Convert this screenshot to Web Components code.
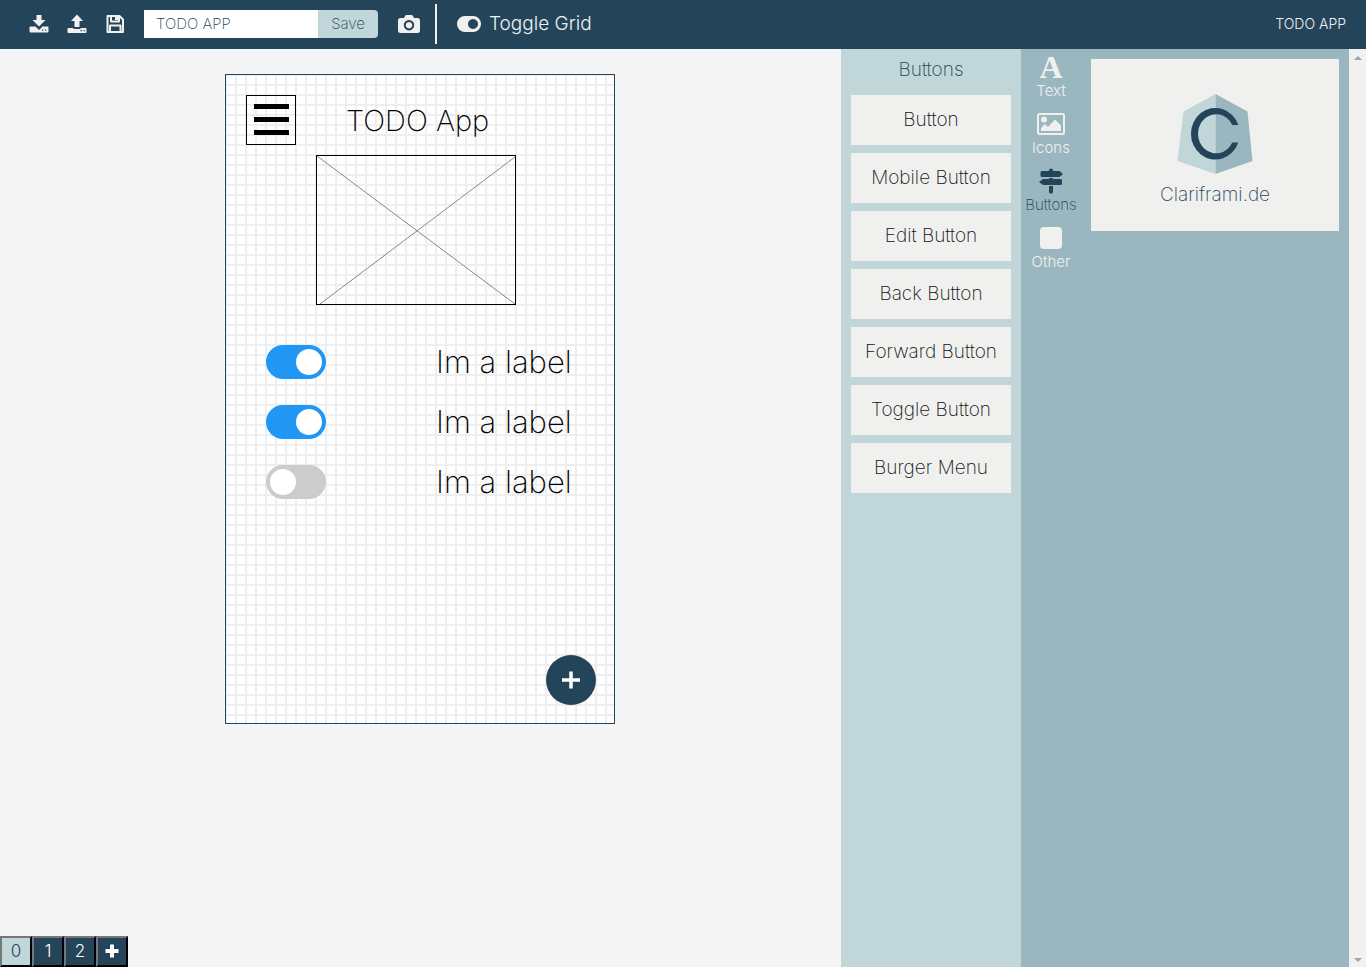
<!DOCTYPE html>
<html lang="en">
<head>
<meta charset="utf-8">
<title>Clariframi.de</title>
<style>
  html, body { height: 100%; margin: 0; }
  body {
    --navy: #24445a;
    --mist: #c1d6d9;
    --steel: #9ab7bf;
    --paper: #f0f1ef;
    font-family: Inter, "Open Sans", sans-serif;
    font-weight: 200;
    background: #f5f5f5;
  }
</style>
</head>
<body>
<wire-app>
  <wire-toolbar slot="top" project="TODO APP"></wire-toolbar>
  <wire-stage slot="stage">
    <wire-node style="left:20px;top:20px"><wire-burger></wire-burger></wire-node>
    <wire-node style="left:120px;top:26px"><wire-heading>TODO App</wire-heading></wire-node>
    <wire-node style="left:90px;top:80px"><wire-image></wire-image></wire-node>
    <wire-node style="left:40px;top:270px"><wire-switch checked>Im a label</wire-switch></wire-node>
    <wire-node style="left:40px;top:330px"><wire-switch checked>Im a label</wire-switch></wire-node>
    <wire-node style="left:40px;top:390px"><wire-switch>Im a label</wire-switch></wire-node>
    <wire-node style="left:320px;top:580px"><wire-fab></wire-fab></wire-node>
  </wire-stage>
  <wire-pages slot="pages"></wire-pages>
  <wire-palette slot="palette" heading="Buttons">
    <wire-item>Button</wire-item>
    <wire-item>Mobile Button</wire-item>
    <wire-item>Edit Button</wire-item>
    <wire-item>Back Button</wire-item>
    <wire-item>Forward Button</wire-item>
    <wire-item>Toggle Button</wire-item>
    <wire-item>Burger Menu</wire-item>
  </wire-palette>
  <wire-categories slot="categories">
    <wire-category><b slot="icon">A</b>Text</wire-category>
    <wire-category><wire-icon slot="icon" name="image"></wire-icon>Icons</wire-category>
    <wire-category active><wire-icon slot="icon" name="signs"></wire-icon>Buttons</wire-category>
    <wire-category><wire-icon slot="icon" name="square"></wire-icon>Other</wire-category>
  </wire-categories>
  <wire-card slot="details">Clariframi.de</wire-card>
  <wire-scrollbar slot="scroll"></wire-scrollbar>
</wire-app>

<script>
const define = (name, html, setup) => {
  const template = document.createElement('template');
  template.innerHTML = html;
  customElements.define(name, class extends HTMLElement {
    constructor() {
      super();
      this.attachShadow({ mode: 'open' }).append(template.content.cloneNode(true));
    }
    connectedCallback() { if (setup) setup(this, this.shadowRoot); }
  });
};

const icons = {
  download: [20, 20, '<path fill-rule="evenodd" d="M7.500 1h5v5h4L10 12.500 3.500 6h4zM1.500 12.500h5L10 16l3.500-3.500h5q1 0 1 1v4q0 1-1 1h-17q-1 0-1-1v-4q0-1 1-1zM13 15.500v1.300h1.300v-1.300zM16 15.500v1.300h1.300v-1.300z"/>'],
  upload: [20, 20, '<path fill-rule="evenodd" d="M10 .5 16 7h-3.500v6h-5V7H4zM1.500 14H6q.5 1 1.500 1h5q1 0 1.500-1h4.500q1 0 1 1v3q0 1-1 1h-17q-1 0-1-1v-3q0-1 1-1zM13.500 16v1.300h1.300V16zM16.500 16v1.300h1.300V16z"/>'],
  save: [20, 20, '<path d="M2.500 2h12L18 5.500V18H2.500zM5 18v-6.500h10.500V18M6 2v5.500h8V2" fill="none" stroke="currentColor" stroke-width="2" stroke-linejoin="round"/><path d="M10 2h3v4h-3z"/>'],
  camera: [22, 20, '<path fill-rule="evenodd" d="M2.500 4H6l1.200-2.300Q7.600 1 8.400 1h5.200q.8 0 1.200.7L16 4h3.500Q22 4 22 6.500v10q0 2.500-2.500 2.500h-17Q0 19 0 16.500v-10Q0 4 2.500 4zM11 6a5.200 5.200 0 1 0 .001 0zM11 8a3.200 3.200 0 1 1-.001 0z"/>'],
  toggle: [24, 16, '<path fill-rule="evenodd" d="M8 0h8a8 8 0 0 1 0 16H8A8 8 0 0 1 8 0zM16 3a5 5 0 1 0 .001 0z"/>'],
  image: [28, 24, '<path fill-rule="evenodd" d="M2.500 1h23Q28 1 28 3.500v17q0 2.500-2.500 2.500h-23Q0 23 0 20.500v-17Q0 1 2.500 1zM2 3v18h24V3z"/><circle cx="7" cy="7.500" r="3"/><path d="M4 19v-3l4-4 3 3 7-7.500 6 6V19z"/>'],
  signs: [24, 26, '<path d="M10 2q0-1.500 2-1.500T14 2v1h6.500L24 6l-3.500 3H3Q1.500 9 1.500 7.500v-3Q1.500 3 3 3h7zM10 10h4v1h7.500q1.500 0 1.500 1.500v3q0 1.500-1.500 1.500H4L0 14l4-3h6zM10 18h4v6q0 1.500-2 1.500T10 24z"/>'],
  square: [22, 22, '<rect width="22" height="22" rx="4"/>'],
  plus: [14, 14, '<path d="M5 .5h4V5h4.500v4H9v4.500H5V9H.5V5H5z"/>']
};

define('wire-icon', `<style>
  :host { display: inline-flex; flex: none; }
  svg { display: block; fill: currentColor; }
</style><svg aria-hidden="true"></svg>`, (host, root) => {
  const [w, h, body] = icons[host.getAttribute('name')];
  const svg = root.querySelector('svg');
  svg.setAttribute('width', w);
  svg.setAttribute('height', h);
  svg.setAttribute('viewBox', '0 0 ' + w + ' ' + h);
  svg.innerHTML = body;
});

define('wire-app', `<style>
  :host {
    display: grid; min-height: 100vh;
    grid-template-columns: minmax(0, 1fr) 180px 60px 268px 17px;
    grid-template-rows: auto minmax(0, 1fr);
  }
  header { grid-column: 1 / -1; }
  main { display: flex; flex-direction: column; justify-content: space-between; }
  .palette { background: var(--mist); }
  .tools, .details { background: var(--steel); }
  .scroll { display: grid; background: #f1f1f1; }
</style>
<header><slot name="top"></slot></header>
<main><slot name="stage"></slot><slot name="pages"></slot></main>
<aside class="palette"><slot name="palette"></slot></aside>
<nav class="tools"><slot name="categories"></slot></nav>
<section class="details"><slot name="details"></slot></section>
<div class="scroll"><slot name="scroll"></slot></div>`);

define('wire-toolbar', `<style>
  :host {
    display: flex; align-items: center; box-sizing: border-box; height: 49px;
    padding: 0 20px 2px 29px; background: var(--navy); color: var(--paper);
  }
  button { display: flex; align-items: center; padding: 0; border: 0; background: none; color: inherit; font: inherit; }
  .files { display: flex; gap: 18px; margin-right: 19px; }
  form { display: flex; height: 28px; margin: 0 20px 0 0; font-size: 15px; }
  input {
    box-sizing: border-box; width: 174px; padding: 0 12px; border: 0; border-radius: 0;
    background: #fff; color: var(--navy); font: inherit;
  }
  form button { width: 60px; justify-content: center; border-radius: 0 4px 4px 0; background: var(--mist); color: var(--navy); }
  .rule { width: 2px; height: 40px; margin: 0 20px 0 15px; background: var(--paper); }
  .grid { gap: 8px; font-size: 19px; font-weight: 300; }
  .name { margin-left: auto; font-size: 14px; font-weight: 300; }
</style>
<div class="files">
  <button aria-label="Download"><wire-icon name="download"></wire-icon></button>
  <button aria-label="Upload"><wire-icon name="upload"></wire-icon></button>
  <button aria-label="Save file"><wire-icon name="save"></wire-icon></button>
</div>
<form onsubmit="return false">
  <input aria-label="Project name">
  <button>Save</button>
</form>
<button aria-label="Screenshot"><wire-icon name="camera"></wire-icon></button>
<div class="rule"></div>
<button class="grid"><wire-icon name="toggle"></wire-icon>Toggle Grid</button>
<span class="name"></span>`, (host, root) => {
  root.querySelector('input').value = host.getAttribute('project');
  root.querySelector('.name').textContent = host.getAttribute('project');
});

define('wire-stage', `<style>
  :host {
    display: block; position: relative; box-sizing: border-box; align-self: center;
    width: 390px; height: 650px; margin: 25px 1px 25px 0;
    border: 1px solid var(--navy); background-color: #fff;
    background-image: linear-gradient(#eee 2px, transparent 2px), linear-gradient(90deg, #eee 2px, transparent 2px);
    background-size: 10px 10px; background-position: 9px 9px;
    color: #000;
  }
</style><slot></slot>`);

define('wire-node', `<style>:host { display: block; position: absolute; }</style><slot></slot>`);

define('wire-burger', `<style>
  :host { display: block; }
  button {
    display: flex; flex-direction: column; gap: 8px; box-sizing: border-box; width: 50px; height: 50px;
    padding: 8px 7px; border: 1px solid #000; background: none;
  }
  i { width: 35px; height: 5px; background: #000; }
</style><button aria-label="Menu"><i></i><i></i><i></i></button>`);

define('wire-heading', `<style>
  :host { display: block; font-size: 29px; line-height: 40px; white-space: nowrap; }
</style><slot></slot>`);

define('wire-image', `<style>
  :host { display: block; box-sizing: border-box; width: 200px; height: 150px; border: 1px solid #000; }
  svg { display: block; stroke: #888; }
</style><svg width="198" height="148" aria-hidden="true"><path d="M0 0 198 148M198 1 3 148"/></svg>`);

define('wire-switch', `<style>
  :host { display: block; }
  label { display: flex; align-items: center; gap: 110px; font-size: 31px; line-height: 34px; white-space: nowrap; }
  input {
    appearance: none; flex: none; box-sizing: border-box; width: 60px; height: 34px; margin: 0; padding: 4px;
    border-radius: 17px; background: #ccc;
  }
  input::before { content: ""; display: block; width: 26px; height: 26px; border-radius: 50%; background: #fff; }
  input:checked { background: #2196f3; }
  input:checked::before { margin-left: 26px; }
</style><label><input type="checkbox"><span><slot></slot></span></label>`, (host, root) => {
  root.querySelector('input').checked = host.hasAttribute('checked');
});

define('wire-fab', `<style>
  :host { display: block; }
  button {
    display: grid; place-items: center; width: 50px; height: 50px; padding: 0;
    border: 0; border-radius: 50%; background: var(--navy);
  }
</style><button aria-label="Add"><svg width="18" height="18" aria-hidden="true"><path d="M9 .5v17M0 9h18" stroke="#fff" stroke-width="3.500"/></svg></button>`);

define('wire-pages', `<style>
  :host { display: flex; }
  button {
    display: grid; place-items: center; box-sizing: border-box; width: 32px; height: 31px; padding: 0 0 1px;
    border: 2px outset #767676; border-color: #767676 #212121 #212121 #767676;
    background: var(--navy); color: #fff; font: inherit; font-size: 17px; font-weight: 300;
  }
  .current { background: var(--mist); color: var(--navy); }
</style>
<button class="current">0</button><button>1</button><button>2</button><button aria-label="Add page"><wire-icon name="plus"></wire-icon></button>`);

define('wire-palette', `<style>
  :host { display: flex; flex-direction: column; gap: 8px; padding: 8px 10px; }
  h2 { margin: 0; font-size: 19px; font-weight: 200; line-height: 26px; padding-bottom: 4px; text-align: center; color: var(--navy); }
</style><h2></h2><slot></slot>`, (host, root) => {
  root.querySelector('h2').textContent = host.getAttribute('heading');
});

define('wire-item', `<style>
  :host { display: block; }
  button { width: 100%; height: 50px; padding: 0 0 2px; border: 0; background: var(--paper); color: #111; font: inherit; font-size: 19px; white-space: nowrap; }
</style><button><slot></slot></button>`);

define('wire-categories', `<style>
  :host { display: flex; flex-direction: column; gap: 10px; padding-top: 5px; }
</style><slot></slot>`);

define('wire-category', `<style>
  :host { display: block; }
  button {
    display: flex; flex-direction: column; align-items: center; width: 100%; padding: 0;
    border: 0; background: none; color: var(--paper); font: inherit; font-size: 15px; font-weight: 300; line-height: 21px;
  }
  :host([active]) button { color: var(--navy); font-weight: 200; }
  .icon { display: grid; place-items: center; height: 26px; overflow: hidden; }
  ::slotted(b) { font: bold 32px/26px "Liberation Serif", serif; }
</style><button><span class="icon"><slot name="icon"></slot></span><span><slot></slot></span></button>`);

define('wire-card', `<style>
  :host {
    display: flex; flex-direction: column; align-items: center; gap: 8px; margin: 10px; padding: 35px 10px 23px;
    background: var(--paper); color: var(--navy); font-size: 19px; line-height: 26px;
  }
  svg { display: block; }
</style>
<svg width="80" height="80" aria-hidden="true">
  <path fill="#c1d6d9" d="M40.500 0 8.500 17.500 2.500 67l38 13z"/>
  <path fill="#9ab7bf" d="M40.500 0 72.500 17.500 77.500 67l-37 13z"/>
  <path fill="#24445a" d="M63.300 31A24.400 25.800 0 1 0 63.300 48.500H57.300A18.100 19.600 0 1 1 57.300 31z"/>
</svg>
<span><slot></slot></span>`);

define('wire-scrollbar', `<style>
  :host { display: flex; flex-direction: column; justify-content: space-between; align-items: center; padding: 7px 0 5px; }
  svg { display: block; fill: #a3a3a3; }
</style>
<svg width="8" height="4"><path d="M4 0 8 4H0z"/></svg>
<svg width="8" height="4"><path d="M4 4 8 0H0z"/></svg>`);
</script>
</body>
</html>
